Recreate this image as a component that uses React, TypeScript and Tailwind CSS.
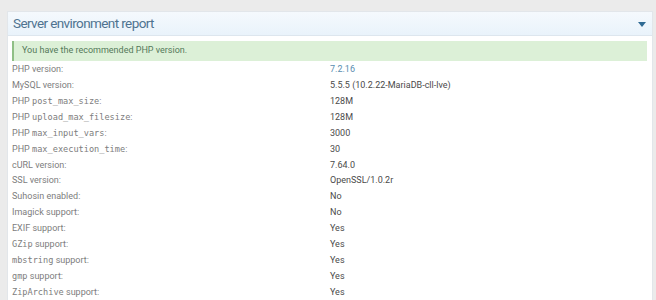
import React from "react";

function M({ children }: { children: React.ReactNode }) {
  return <span className="font-['DejaVu_Sans_Mono'] text-[8.6px]">{children}</span>;
}

type Row = { label: React.ReactNode; value: React.ReactNode };

const rows: Row[] = [
  { label: <>PHP version:</>, value: <span className="text-[#5a8db0]">7.2.16</span> },
  { label: <>MySQL version:</>, value: "5.5.5 (10.2.22-MariaDB-cll-lve)" },
  { label: <>PHP <M>post_max_size</M>:</>, value: "128M" },
  { label: <>PHP <M>upload_max_filesize</M>:</>, value: "128M" },
  { label: <>PHP <M>max_input_vars</M>:</>, value: "3000" },
  { label: <>PHP <M>max_execution_time</M>:</>, value: "30" },
  { label: <>cURL version:</>, value: "7.64.0" },
  { label: <>SSL version:</>, value: "OpenSSL/1.0.2r" },
  { label: <>Suhosin enabled:</>, value: "No" },
  { label: <>Imagick support:</>, value: "No" },
  { label: <>EXIF support:</>, value: "Yes" },
  { label: <><M>GZip</M> support:</>, value: "Yes" },
  { label: <><M>mbstring</M> support:</>, value: "Yes" },
  { label: <><M>gmp</M> support:</>, value: "Yes" },
  { label: <><M>ZipArchive</M> support:</>, value: "Yes" },
];

export default function App() {
  return (
    <div className="w-[656px] h-[300px] overflow-hidden bg-[#ebebeb] pt-[11px] pl-[7px] pr-[3px] font-['Roboto',sans-serif]">
      <div className="bg-white h-[300px] border border-[#e2e6ea]">
        <div className="h-[24px] flex items-center justify-between pl-[5px] pr-[6px] bg-gradient-to-b from-[#f5f9fd] to-[#e9f3fb] border-b border-[#dde6ee]">
          <span className="text-[13.5px] tracking-[-0.6px] text-[#4f7390] leading-none">Server environment report</span>
          <svg width="8" height="5" viewBox="0 0 8 5" className="mt-[1px]">
            <path d="M0 0 L8 0 L4 5 Z" fill="#2f6a93" />
          </svg>
        </div>
        <div className="px-[4px] pt-[5px]">
          <div className="h-[20px] flex items-center bg-[#dcf0d7] border-l-2 border-[#8fbf85] pl-[8px] mr-[1px] text-[9px] text-[#55795a]">
            You have the recommended PHP version.
          </div>
          <div className="pt-[1px]">
            {rows.map((r, i) => (
              <div key={i} className="h-[15.9px] flex items-center text-[9px]">
                <div className="w-[318px] text-[#7d7d7d]">{r.label}</div>
                <div className="text-[#4a4a4a]">{r.value}</div>
              </div>
            ))}
          </div>
        </div>
      </div>
    </div>
  );
}
